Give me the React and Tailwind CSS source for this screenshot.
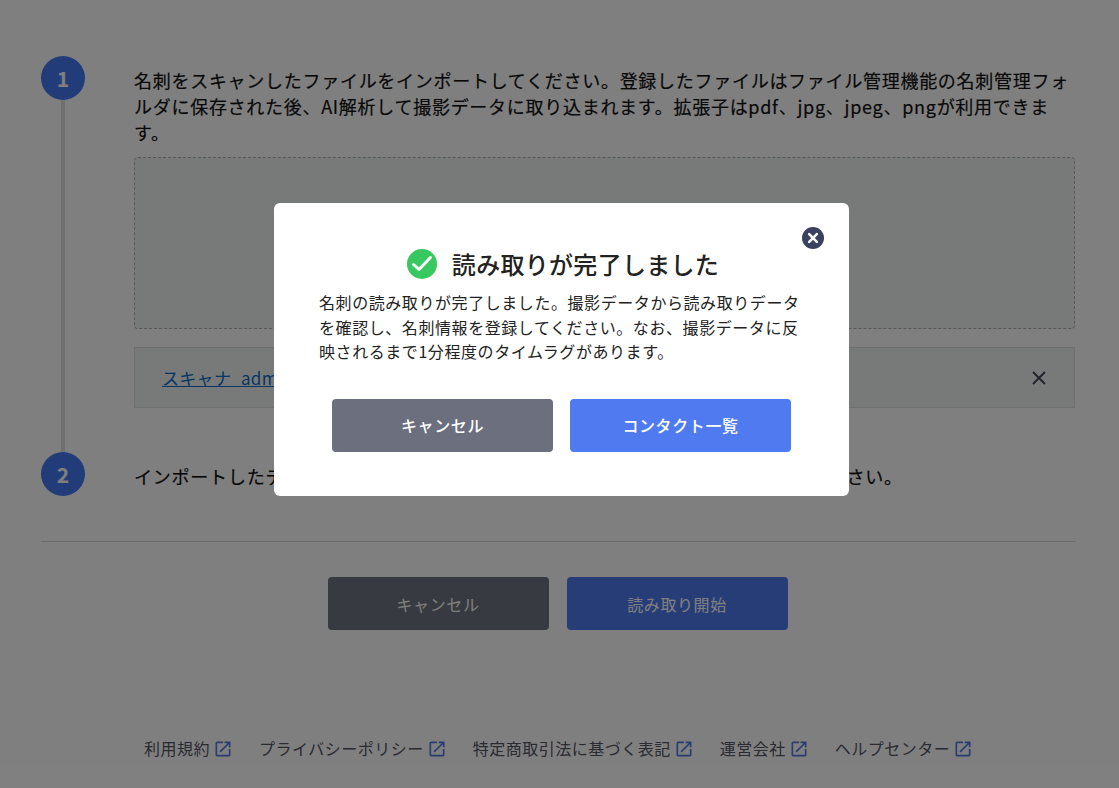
const FONT = '"Noto Sans CJK JP", "Noto Sans", sans-serif';

function ExternalIcon() {
  return (
    <svg viewBox="0 0 24 24" className="w-5 h-5 ml-[3px] mt-[2px] shrink-0" fill="#4f78e4">
      <path d="M19 19H5V5h7V3H5c-1.11 0-2 .9-2 2v14c0 1.1.89 2 2 2h14c1.1 0 2-.9 2-2v-7h-2v7zM14 3v2h3.59l-9.83 9.83 1.41 1.41L19 6.41V10h2V3h-7z" />
    </svg>
  );
}

function Circle({ n }) {
  return (
    <div className="w-11 h-11 rounded-full bg-[#4278f0] text-white flex items-center justify-center text-[21px] font-bold shrink-0 leading-none">
      {n}
    </div>
  );
}

function FooterLink({ label }) {
  return (
    <a className="flex items-center text-[16px] tracking-[0.5px] text-[#545462]">
      <span>{label}</span>
      <ExternalIcon />
    </a>
  );
}

export default function App() {
  return (
    <div className="relative w-[1119px] h-[788px] overflow-hidden bg-white text-[#111]" style={{ fontFamily: FONT }}>
      <main className="pt-14 pl-[41px] w-[1076px]">
        <div className="flex h-[396px]">
          <div className="w-[93px] flex flex-col shrink-0">
            <Circle n="1" />
            <div className="w-1 flex-1 bg-[#dedede] ml-5" />
          </div>
          <div className="flex-1 pt-[11px] mr-px">
            <p className="text-[18px] leading-[26px] tracking-[0.72px] [-webkit-text-stroke:0.2px_#111]">
              名刺をスキャンしたファイルをインポートしてください。登録したファイルはファイル管理機能の名刺管理フォルダに保存された後、AI解析して撮影データに取り込まれます。拡張子はpdf、jpg、jpeg、pngが利用できます。
            </p>
            <div className="mt-3 h-[172px] rounded-[4px] border border-dashed border-[#b0b0b0] bg-[#f1f5f2]" />
            <div className="mt-[18px] h-[61px] border border-[#dcdedc] bg-[#f1f5f2] flex items-center justify-between pl-[27px] pr-[27px]">
              <a className="text-[17px] tracking-[0.3px] text-[#0a6cc4] underline">スキャナ_admin_20240101.pdf</a>
              <svg viewBox="0 0 16 16" className="w-4 h-4" fill="none" stroke="#3c4252" strokeWidth="1.8">
                <path d="M2 2l12 12M14 2L2 14" />
              </svg>
            </div>
          </div>
        </div>
        <div className="flex h-11">
          <div className="w-[93px] shrink-0">
            <Circle n="2" />
          </div>
          <p className="text-[18px] leading-[48px] tracking-[0.78px] whitespace-nowrap [-webkit-text-stroke:0.2px_#111]">
            インポートしたデータを確認後、画面の「読み取り開始」ボタンをクリックしてください。
          </p>
        </div>
        <div className="mt-[45px] border-t border-[#d8d8d8]" />
        <div className="mt-[35px] flex justify-center gap-[18px] pr-[2px]">
          <button className="w-[221px] h-[53px] rounded-[4px] bg-[#6f7480] text-white text-[16px] tracking-[0.6px]">キャンセル</button>
          <button className="w-[221px] h-[53px] rounded-[4px] bg-[#4f7bef] text-white text-[16px] tracking-[0.6px]">読み取り開始</button>
        </div>
      </main>
      <footer className="mt-[106px] pl-[144px] flex gap-[26px]">
        <FooterLink label="利用規約" />
        <FooterLink label="プライバシーポリシー" />
        <FooterLink label="特定商取引法に基づく表記" />
        <FooterLink label="運営会社" />
        <FooterLink label="ヘルプセンター" />
      </footer>

      <div className="absolute inset-0 bg-black/50" />
      <div className="absolute left-[274px] top-[203px] w-[575px] h-[293px] rounded-[6px] bg-white pt-[46px] px-[45px]">
        <button className="absolute right-[25px] top-[24px] w-[22px] h-[22px]">
          <svg viewBox="0 0 22 22" className="w-[22px] h-[22px]">
            <circle cx="11" cy="11" r="11" fill="#3a4160" />
            <path d="M7.2 7.2l7.6 7.6M14.8 7.2l-7.6 7.6" stroke="#fff" strokeWidth="2.6" strokeLinecap="round" />
          </svg>
        </button>
        <div className="flex items-center justify-center h-[30px] gap-[15px] pl-[3px]">
          <svg viewBox="0 0 30 30" className="w-[30px] h-[30px] shrink-0">
            <circle cx="15" cy="15" r="15" fill="#37c85f" />
            <path d="M6.5 15.5l5.5 5 11.5-12" fill="none" stroke="#fff" strokeWidth="3" strokeLinecap="round" strokeLinejoin="round" />
          </svg>
          <h2 className="text-[24px] tracking-[0.3px] font-medium leading-[30px] text-[#222]">読み取りが完了しました</h2>
        </div>
        <p className="mt-[11px] text-[16px] tracking-[0.57px] leading-[24.5px] text-[#222]">
          名刺の読み取りが完了しました。撮影データから読み取りデータを確認し、名刺情報を登録してください。なお、撮影データに反映されるまで1分程度のタイムラグがあります。
        </p>
        <div className="mt-[35px] flex justify-center gap-[17px]">
          <button className="w-[221px] h-[53px] rounded-[4px] bg-[#6b6f7e] text-white text-[16px] tracking-[0.6px] font-medium">キャンセル</button>
          <button className="w-[221px] h-[53px] rounded-[4px] bg-[#507bf0] text-white text-[16px] tracking-[0.6px] font-medium">コンタクト一覧</button>
        </div>
      </div>
    </div>
  );
}
